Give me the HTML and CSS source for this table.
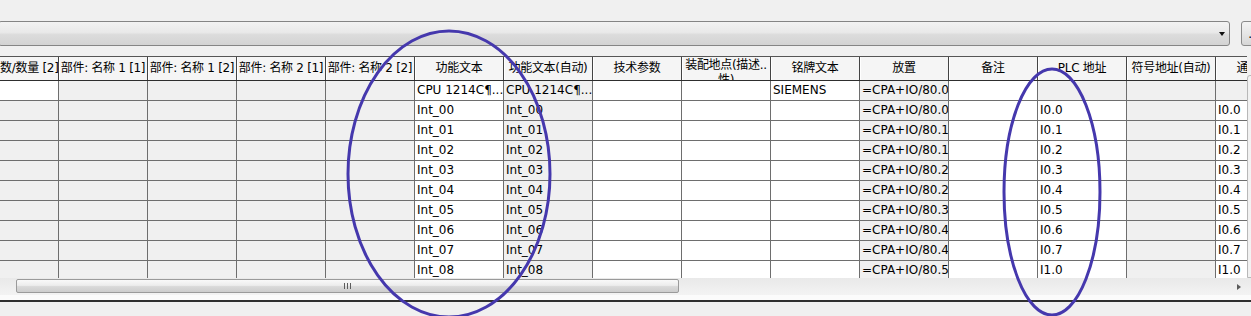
FILE: index.html
```html
<!DOCTYPE html>
<html>
	<head>
		<meta charset="utf-8">
		<title>部件列表</title>
		<link rel="stylesheet" href="styles.css">
	</head>
	<body>
	<div id="app">
		<div class="topline"></div>

		<!-- filter combo + browse button -->
		<div class="filterbar">
			<div class="combo"><span class="arrow"></span></div>
			<button class="more">...</button>
		</div>

		<div class="grid">
			<div class="grid-main">
				<div class="sheet">
					<div class="head">
						<div class="h"><span>部件: 数/数量 [2]</span></div>
						<div class="h"><span>部件: 名称 1 [1]</span></div>
						<div class="h"><span>部件: 名称 1 [2]</span></div>
						<div class="h"><span>部件: 名称 2 [1]</span></div>
						<div class="h"><span>部件: 名称 2 [2]</span></div>
						<div class="h"><span>功能文本</span></div>
						<div class="h"><span>功能文本(自动)</span></div>
						<div class="h"><span>技术参数</span></div>
						<div class="h wrap"><span>装配地点(描述..</span><br><span>性)</span></div>
						<div class="h"><span>铭牌文本</span></div>
						<div class="h"><span>放置</span></div>
						<div class="h"><span>备注</span></div>
						<div class="h"><span>PLC 地址</span></div>
						<div class="h"><span>符号地址(自动)</span></div>
						<div class="h"><span>通道地址</span></div>
					</div>

					<div class="row">
						<div class="c"></div><div class="c g"></div><div class="c g"></div><div class="c g"></div><div class="c g"></div>
						<div class="c">CPU 1214C¶...</div><div class="c g">CPU 1214C¶...</div>
						<div class="c"></div><div class="c"></div><div class="c">SIEMENS</div>
						<div class="c g">=CPA+IO/80.0</div><div class="c"></div>
						<div class="c g"></div><div class="c g"></div><div class="c g"></div>
					</div>
					<div class="row">
						<div class="c g"></div><div class="c g"></div><div class="c g"></div><div class="c g"></div><div class="c g"></div>
						<div class="c">Int_00</div><div class="c g">Int_00</div>
						<div class="c"></div><div class="c"></div><div class="c"></div>
						<div class="c g">=CPA+IO/80.0</div><div class="c"></div>
						<div class="c">I0.0</div><div class="c g"></div><div class="c">I0.0</div>
					</div>
					<div class="row">
						<div class="c g"></div><div class="c g"></div><div class="c g"></div><div class="c g"></div><div class="c g"></div>
						<div class="c">Int_01</div><div class="c g">Int_01</div>
						<div class="c"></div><div class="c"></div><div class="c"></div>
						<div class="c g">=CPA+IO/80.1</div><div class="c"></div>
						<div class="c">I0.1</div><div class="c g"></div><div class="c">I0.1</div>
					</div>
					<div class="row">
						<div class="c g"></div><div class="c g"></div><div class="c g"></div><div class="c g"></div><div class="c g"></div>
						<div class="c">Int_02</div><div class="c g">Int_02</div>
						<div class="c"></div><div class="c"></div><div class="c"></div>
						<div class="c g">=CPA+IO/80.1</div><div class="c"></div>
						<div class="c">I0.2</div><div class="c g"></div><div class="c">I0.2</div>
					</div>
					<div class="row">
						<div class="c g"></div><div class="c g"></div><div class="c g"></div><div class="c g"></div><div class="c g"></div>
						<div class="c">Int_03</div><div class="c g">Int_03</div>
						<div class="c"></div><div class="c"></div><div class="c"></div>
						<div class="c g">=CPA+IO/80.2</div><div class="c"></div>
						<div class="c">I0.3</div><div class="c g"></div><div class="c">I0.3</div>
					</div>
					<div class="row">
						<div class="c g"></div><div class="c g"></div><div class="c g"></div><div class="c g"></div><div class="c g"></div>
						<div class="c">Int_04</div><div class="c g">Int_04</div>
						<div class="c"></div><div class="c"></div><div class="c"></div>
						<div class="c g">=CPA+IO/80.2</div><div class="c"></div>
						<div class="c">I0.4</div><div class="c g"></div><div class="c">I0.4</div>
					</div>
					<div class="row">
						<div class="c g"></div><div class="c g"></div><div class="c g"></div><div class="c g"></div><div class="c g"></div>
						<div class="c">Int_05</div><div class="c g">Int_05</div>
						<div class="c"></div><div class="c"></div><div class="c"></div>
						<div class="c g">=CPA+IO/80.3</div><div class="c"></div>
						<div class="c">I0.5</div><div class="c g"></div><div class="c">I0.5</div>
					</div>
					<div class="row">
						<div class="c g"></div><div class="c g"></div><div class="c g"></div><div class="c g"></div><div class="c g"></div>
						<div class="c">Int_06</div><div class="c g">Int_06</div>
						<div class="c"></div><div class="c"></div><div class="c"></div>
						<div class="c g">=CPA+IO/80.4</div><div class="c"></div>
						<div class="c">I0.6</div><div class="c g"></div><div class="c">I0.6</div>
					</div>
					<div class="row">
						<div class="c g"></div><div class="c g"></div><div class="c g"></div><div class="c g"></div><div class="c g"></div>
						<div class="c">Int_07</div><div class="c g">Int_07</div>
						<div class="c"></div><div class="c"></div><div class="c"></div>
						<div class="c g">=CPA+IO/80.4</div><div class="c"></div>
						<div class="c">I0.7</div><div class="c g"></div><div class="c">I0.7</div>
					</div>
					<div class="row">
						<div class="c g"></div><div class="c g"></div><div class="c g"></div><div class="c g"></div><div class="c g"></div>
						<div class="c">Int_08</div><div class="c g">Int_08</div>
						<div class="c"></div><div class="c"></div><div class="c"></div>
						<div class="c g">=CPA+IO/80.5</div><div class="c"></div>
						<div class="c">I1.0</div><div class="c g"></div><div class="c">I1.0</div>
					</div>
				</div>
			</div>
			<div class="vscroll"></div>
		</div>

		<div class="hscroll">
			<div class="hbtn"></div>
			<div class="thumb"><span class="grip"></span></div>
			<div class="htrack"></div>
			<div class="hbtn"><span class="tri"></span></div>
		</div>
		<div class="statusline"></div>

		<!-- pen marks drawn over the grid -->
		<svg class="marks" width="1251" height="316" viewBox="0 0 1251 316">
			<ellipse cx="449" cy="174" rx="101" ry="143"/>
			<ellipse cx="1052" cy="192" rx="48" ry="123"/>
		</svg>
	</div>
	</body>
</html>
```

FILE: styles.css
```css
body{
	margin:0;
	background-color:#f0f0f0;
}
#app{
	position:relative;
	width:1251px;
	height:316px;
	overflow:hidden;
	background-color:#f0f0f0;
	font-family:"DejaVu Sans", "Noto Sans CJK SC", sans-serif;
	font-size:12px;
	color:#000;
}
.topline{
	height:21px;
}

/* combo box row */
.filterbar{
	display:flex;
	height:25px;
	gap:11px;
}
.combo{
	flex:none;
	box-sizing:border-box;
	width:1232px;
	margin-left:-2px;
	border:1px solid #858585;
	border-radius:3px;
	background:linear-gradient(#f3f3f3, #e9e9e9 45%, #dcdcdc 55%, #d3d3d3);
	display:flex;
	justify-content:flex-end;
	align-items:center;
	padding-right:4px;
}
.arrow{
	width:0;
	height:0;
	border-top:4px solid #111;
	border-left:3.5px solid transparent;
	border-right:3.5px solid transparent;
}
.more{
	flex:none;
	width:26px;
	padding:0;
	border:1px solid #8a8a8a;
	border-radius:3px;
	background:linear-gradient(#f3f3f3, #e6e6e6 50%, #d6d6d6);
	font-family:"DejaVu Sans", sans-serif;
	font-size:12px;
	color:#000;
}

/* data grid */
.grid{
	display:flex;
	height:222px;
	margin-top:10px;
}
.grid-main{
	flex:none;
	width:1247px;
	overflow:hidden;
}
.sheet{
	width:1335px;
	margin-left:-30px;
}
.head{
	display:grid;
	grid-template-columns:repeat(15, 89px);
	box-sizing:border-box;
	height:25px;
	border-top:1px solid #555;
	border-bottom:1px solid #2e2e2e;
	background-color:#f5f5f5;
}
.h{
	box-sizing:border-box;
	overflow:hidden;
	white-space:nowrap;
	text-align:center;
	border-right:1px solid #444;
	box-shadow:inset 1px 0 #fff;
	font-size:12px;
	letter-spacing:-0.3px;
	line-height:23px;
}
/* long captions stay centred and get cut on both sides */
.h span{
	display:inline-block;
	margin:0 -20px;
}
.h.wrap{
	line-height:15px;
	padding-top:1px;
}
.row{
	display:grid;
	grid-template-columns:repeat(15, 89px);
	height:20px;
}
.c{
	box-sizing:border-box;
	border-right:1px solid #6e6e6e;
	border-bottom:1px solid #6e6e6e;
	background-color:#fff;
	padding-left:2px;
	line-height:19px;
	white-space:nowrap;
	overflow:hidden;
}
.c.g{
	background-color:#f0f0f0;
}
.vscroll{
	flex:none;
	width:17px;
	margin-top:19px;
	border:1px solid #b8b8b8;
	border-radius:3px 0 0 0;
	background:linear-gradient(to right, #f1f1f1, #fbfbfb);
}

/* horizontal scroll bar */
.hscroll{
	display:flex;
	height:17px;
	background:linear-gradient(#e9e9e9, #f3f3f3);
}
.hbtn{
	flex:none;
	width:16px;
	display:flex;
	align-items:center;
	justify-content:center;
}
.hbtn:last-child{
	width:17px;
	margin-right:4px;
}
.thumb{
	flex:none;
	box-sizing:border-box;
	width:663px;
	margin:1px 0 2px;
	border:1px solid #9a9a9a;
	border-radius:2px;
	background:linear-gradient(#f9f9f9, #ececec 45%, #d9d9d9 55%, #cdcdcd);
	display:flex;
	align-items:center;
	justify-content:center;
}
.grip{
	width:7px;
	height:6px;
	background:repeating-linear-gradient(to right, #5c5c5c 0 1px, transparent 1px 3px);
}
.htrack{
	flex:1;
}
.tri{
	width:0;
	height:0;
	border-left:4px solid #5a5a5a;
	border-top:3.5px solid transparent;
	border-bottom:3.5px solid transparent;
}
.statusline{
	height:5px;
	background-color:#fbfbfb;
	border-bottom:2px solid #2f2f2f;
}

.marks{
	position:absolute;
	left:0;
	top:0;
	pointer-events:none;
}
.marks ellipse{
	fill:none;
	stroke:#4538ad;
	stroke-width:3;
}
```
